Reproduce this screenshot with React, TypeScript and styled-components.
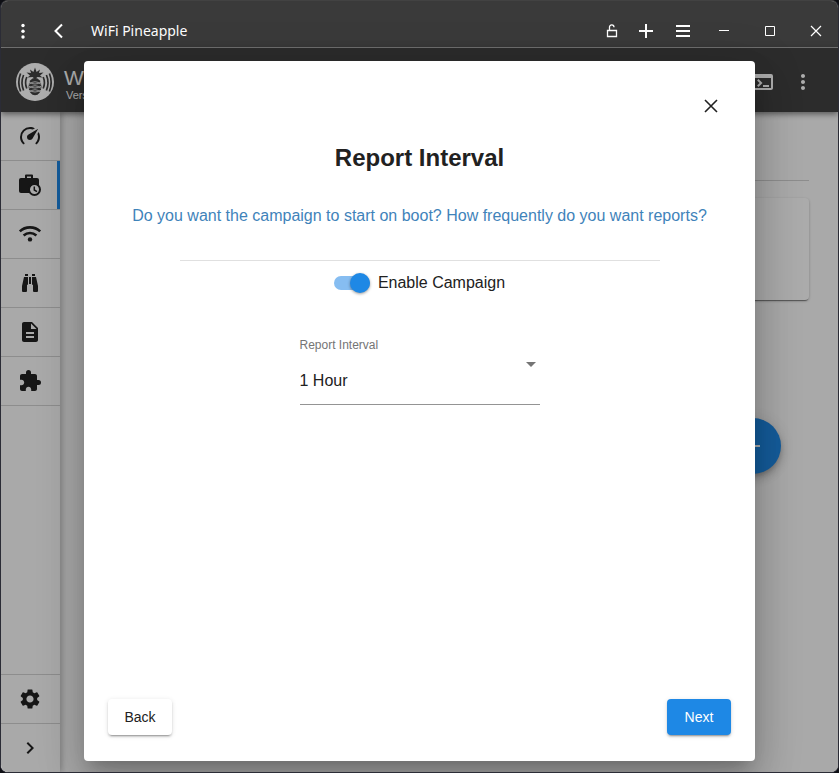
import React, { useState } from "react";
import styled, { createGlobalStyle } from "styled-components";
import {
  MdAdd,
  MdChevronRight,
  MdDescription,
  MdExtension,
  MdMoreVert,
  MdOutlineTerminal,
  MdSettings,
} from "react-icons/md";

const GlobalStyle = createGlobalStyle`
  *, *::before, *::after { box-sizing: border-box; }
  body {
    margin: 0;
    background: #0e0f14;
    color: #212121;
    font-family: "Liberation Sans", Arial, sans-serif;
    font-size: 16px;
  }
  button, select, input { font: inherit; }
`;

/* ---------- window frame ---------- */

const AppWindow = styled.div`
  display: flex;
  flex-direction: column;
  min-height: 100vh;
  border: 1px solid #2b2c36;
  border-top-color: #424242;
  border-radius: 8px;
  overflow: hidden;
  background: #aaaaaa;
`;

const TitleBar = styled.header`
  display: flex;
  align-items: center;
  height: 47px;
  padding: 13px 0 0 4px;
  background: #3a3a3a;
  border-bottom: 1px solid #7b7b7b;
  color: #ffffff;
`;

const BarButton = styled.button<{ $width: number }>`
  display: flex;
  align-items: center;
  justify-content: center;
  width: ${(p) => p.$width}px;
  height: 32px;
  padding: 0;
  border: 0;
  background: none;
  color: inherit;
`;

const WindowTitle = styled.h1`
  flex: 1;
  margin: 0 0 0 14px;
  font-family: "Noto Sans", "Open Sans", sans-serif;
  font-size: 14px;
  font-weight: 400;
  line-height: 20px;
`;

/* ---------- application shell ---------- */

const AppArea = styled.div`
  position: relative;
  display: flex;
  flex: 1;
  flex-direction: column;
  background: #fafafa;
`;

const Toolbar = styled.div`
  z-index: 2;
  display: flex;
  align-items: center;
  height: 64px;
  padding: 3px 15px 0;
  background: #424242;
  color: #ffffff;
  box-shadow: 0 2px 6px rgba(0, 0, 0, 0.5);
`;

const Brand = styled.div`
  flex: 1;
  margin-left: 10px;
  padding-top: 4px;
`;

const BrandName = styled.div`
  font-size: 21px;
  line-height: 22px;
`;

const BrandVersion = styled.div`
  padding-left: 2px;
  font-size: 11px;
  line-height: 12px;
`;

const ToolbarButton = styled.button`
  display: flex;
  align-items: center;
  justify-content: center;
  width: 40px;
  height: 40px;
  padding: 0;
  border: 0;
  background: none;
  color: inherit;
`;

const Columns = styled.div`
  display: flex;
  flex: 1;
`;

const Sidebar = styled.nav`
  z-index: 1;
  display: flex;
  flex-direction: column;
  justify-content: space-between;
  width: 59px;
  background: #fafafa;
  box-shadow: 2px 0 6px rgba(0, 0, 0, 0.25);
`;

const NavGroup = styled.div`
  display: flex;
  flex-direction: column;
`;

const NavItem = styled.button<{ $active?: boolean; $line?: "top" | "bottom" }>`
  display: flex;
  align-items: center;
  justify-content: center;
  height: 49px;
  padding: 0 1px 0 0;
  border: 0 solid #d0d0d0;
  border-${(p) => p.$line ?? "bottom"}-width: 1px;
  background: none;
  color: #212121;
  box-shadow: ${(p) => (p.$active ? "inset -3px 0 0 #1e88e5" : "none")};
`;

const Main = styled.main`
  display: flex;
  flex: 1;
  flex-direction: column;
  padding: 68px 29px 0 28px;
`;

const Rule = styled.hr`
  width: 100%;
  margin: 0;
  border: 0;
  border-top: 1px solid #d0d0d0;
`;

const Card = styled.section`
  height: 102px;
  margin-top: 17px;
  border-radius: 4px;
  background: #fcfcfc;
  box-shadow: 0 2px 1px -1px rgba(0, 0, 0, 0.4), 0 1px 3px rgba(0, 0, 0, 0.25);
`;

const AddButton = styled.button`
  display: flex;
  align-items: center;
  align-self: flex-end;
  justify-content: center;
  width: 56px;
  height: 56px;
  margin: 118px 28px 0 0;
  padding: 0;
  border: 0;
  border-radius: 50%;
  background: #1e88e5;
  color: #ffffff;
  box-shadow: 0 3px 5px -1px rgba(0, 0, 0, 0.2), 0 6px 10px rgba(0, 0, 0, 0.14),
    0 1px 18px rgba(0, 0, 0, 0.12);
`;

/* ---------- dialog ---------- */

const Backdrop = styled.div`
  position: absolute;
  inset: 0;
  z-index: 3;
  display: flex;
  padding: 13px 83px 11px;
  background: rgba(0, 0, 0, 0.32);
`;

const Dialog = styled.section`
  display: flex;
  flex: 1;
  flex-direction: column;
  padding: 25px 24px 26px;
  border-radius: 4px;
  background: #ffffff;
  box-shadow: 0 11px 15px -7px rgba(0, 0, 0, 0.2),
    0 24px 38px 3px rgba(0, 0, 0, 0.14), 0 9px 46px 8px rgba(0, 0, 0, 0.12);
`;

const CloseButton = styled.button`
  display: flex;
  align-items: center;
  align-self: flex-end;
  justify-content: center;
  width: 40px;
  height: 40px;
  padding: 0;
  border: 0;
  background: none;
  color: #212121;
`;

const Content = styled.div`
  display: flex;
  flex: 1;
  flex-direction: column;
  align-items: center;
`;

const Heading = styled.h2`
  margin: 16px 0 30px;
  font-size: 24px;
  font-weight: 700;
  line-height: 32px;
`;

const Question = styled.p`
  margin: 0;
  color: #3f83ba;
  line-height: 24px;
  text-align: center;
`;

const Divider = styled.hr`
  width: 100%;
  max-width: 480px;
  margin: 32px 0 10px;
  border: 0;
  border-top: 1px solid #e0e0e0;
`;

const ToggleLabel = styled.label`
  display: flex;
  align-items: center;
  gap: 8px;
  line-height: 24px;
`;

const Toggle = styled.input`
  display: flex;
  align-items: center;
  width: 36px;
  height: 14px;
  margin: 0;
  appearance: none;
  border-radius: 7px;
  background: #bdbdbd;

  &::before {
    content: "";
    width: 20px;
    height: 20px;
    border-radius: 50%;
    background: #fafafa;
    box-shadow: 0 1px 3px rgba(0, 0, 0, 0.4);
  }

  &:checked {
    justify-content: flex-end;
    background: #86bdf1;
  }

  &:checked::before { background: #1e88e5; }
`;

const Field = styled.div`
  position: relative;
  display: flex;
  flex-direction: column;
  width: 240px;
  margin-top: 42px;
`;

const FieldLabel = styled.label`
  color: #757575;
  font-size: 12px;
  line-height: 16px;
`;

const Select = styled.select`
  height: 52px;
  padding: 4px 24px 0 0;
  appearance: none;
  border: 0;
  border-bottom: 1px solid #949494;
  border-radius: 0;
  background: none;
  color: #212121;
`;

const Arrow = styled.svg`
  position: absolute;
  top: 25px;
  right: 4px;
  pointer-events: none;
`;

const Actions = styled.footer`
  display: flex;
  justify-content: space-between;
`;

const ActionButton = styled.button<{ $primary?: boolean }>`
  min-width: 64px;
  height: 36px;
  padding: 0 16px;
  border: 0;
  border-radius: 4px;
  background: ${(p) => (p.$primary ? "#1e88e5" : "#ffffff")};
  color: ${(p) => (p.$primary ? "#ffffff" : "#212121")};
  font-size: 14px;
  font-weight: 500;
  box-shadow: 0 3px 1px -2px rgba(0, 0, 0, 0.2), 0 2px 2px rgba(0, 0, 0, 0.14),
    0 1px 5px rgba(0, 0, 0, 0.12);
`;

/* ---------- drawings ---------- */

const Glyph = ({ d }: { d: string }) => (
  <svg width="24" height="24" viewBox="0 0 24 24" fill="currentColor" aria-hidden="true">
    <path d={d} />
  </svg>
);

const GAUGE =
  "M12,16A3,3 0 0,1 9,13C9,11.88 9.61,10.9 10.5,10.39L20.21,4.77L14.68,14.35C14.18,15.33 13.17,16 12,16M12,3C13.81,3 15.5,3.5 16.97,4.32L14.87,5.53C14,5.19 13,5 12,5A8,8 0 0,0 4,13C4,15.21 4.89,17.21 6.34,18.65H6.35C6.74,19.04 6.74,19.67 6.35,20.06C5.96,20.45 5.32,20.45 4.93,20.07V20.07C3.12,18.26 2,15.76 2,13A10,10 0 0,1 12,3M22,13C22,15.76 20.88,18.26 19.07,20.07V20.07C18.68,20.45 18.05,20.45 17.66,20.06C17.27,19.67 17.27,19.04 17.66,18.65V18.65C19.11,17.2 20,15.21 20,13C20,12 19.81,11 19.46,10.1L20.67,8C21.5,9.5 22,11.18 22,13Z";
const BINOCULARS =
  "M11,6H13V13H11V6M9,20A1,1 0 0,1 8,21H5A1,1 0 0,1 4,20V15L6,6H10V13A1,1 0 0,1 9,14V20M10,5H7V3H10V5M15,20V14A1,1 0 0,1 14,13V6H18L20,15V20A1,1 0 0,1 19,21H16A1,1 0 0,1 15,20M14,5V3H17V5H14Z";

const CampaignIcon = () => (
  <svg width="24" height="24" viewBox="0 0 24 24" fill="none" aria-hidden="true">
    <path d="M8 6V2.5H14V6" stroke="currentColor" strokeWidth="2" strokeLinejoin="round" />
    <rect x="1" y="5" width="20" height="15" rx="2" fill="currentColor" />
    <circle cx="16.5" cy="16.5" r="5.5" fill="#fafafa" stroke="currentColor" strokeWidth="2" />
    <path d="M16.3 13.5V17L19 18.7" stroke="currentColor" strokeWidth="1.5" />
  </svg>
);

const WifiIcon = () => (
  <svg
    width="24"
    height="24"
    viewBox="0 0 24 24"
    fill="none"
    stroke="currentColor"
    strokeWidth="2.6"
    aria-hidden="true"
  >
    <path d="M1.8 9.4C7.5 4 16.5 4 22.2 9.4" />
    <path d="M5.6 13.5C9.3 10.2 14.7 10.2 18.4 13.5" />
    <circle cx="12" cy="17.4" r="2.2" fill="currentColor" stroke="none" />
  </svg>
);

const PineappleLogo = () => (
  <svg width="38" height="38" viewBox="0 0 38 38" aria-hidden="true">
    <circle cx="19" cy="19" r="19" fill="#ffffff" />
    <ellipse cx="19" cy="23.5" rx="6.5" ry="8.8" fill="#424242" />
    <path
      d="M19 4.5L20.6 9L24 6.5L23 10L27.5 9.5L24 12.5L26.5 14.5L21.5 14L19 16L16.5 14L11.5 14.5L14 12.5L10.5 9.5L15 10L14 6.5L17.4 9Z"
      fill="#424242"
    />
    <path
      d="M12.5 19Q19 23 25.5 19M12.5 23Q19 27 25.5 23M12.5 27Q19 31 25.5 27M12.5 21.5Q19 16 25.5 21.5M12.5 25.5Q19 20 25.5 25.5M12.5 29.5Q19 24 25.5 29.5"
      stroke="#ffffff"
      strokeWidth="0.8"
      fill="none"
    />
    <path
      d="M10.8 14Q8.4 19.5 10.8 25.5M7.6 12Q4.4 19.5 7.6 27.5M4.6 10.5Q1 19.5 4.6 28.5M27.2 14Q29.6 19.5 27.2 25.5M30.4 12Q33.6 19.5 30.4 27.5M33.4 10.5Q37 19.5 33.4 28.5"
      stroke="#424242"
      strokeWidth="1.7"
      fill="none"
    />
  </svg>
);

const LineIcon = ({ d, weight = 1 }: { d: string; weight?: number }) => (
  <svg
    width="16"
    height="16"
    viewBox="0 0 16 16"
    fill="none"
    stroke="currentColor"
    strokeWidth={weight}
    aria-hidden="true"
  >
    <path d={d} />
  </svg>
);

const KebabIcon = () => (
  <svg width="4" height="16" viewBox="0 0 4 16" fill="currentColor" aria-hidden="true">
    <circle cx="2" cy="2.5" r="1.7" />
    <circle cx="2" cy="8.2" r="1.7" />
    <circle cx="2" cy="14" r="1.7" />
  </svg>
);

const intervals = ["1 Hour", "6 Hours", "12 Hours", "24 Hours"];

export default function App() {
  const [enabled, setEnabled] = useState(true);
  const [reportInterval, setReportInterval] = useState(intervals[0]);

  return (
    <>
      <GlobalStyle />
      <AppWindow>
        <TitleBar>
          <BarButton $width={36} aria-label="Menu">
            <KebabIcon />
          </BarButton>
          <BarButton $width={36} aria-label="Go back">
            <LineIcon d="M11 1.5L4.5 8L11 14.5" weight={2} />
          </BarButton>
          <WindowTitle>WiFi Pineapple</WindowTitle>
          <BarButton $width={32} aria-label="Site security">
            <LineIcon d="M3.5 7.5H12.5V13.5H3.5ZM5.5 7.5V4C5.5 1.2 10 1.2 10 4.2" weight={1.3} />
          </BarButton>
          <BarButton $width={36} aria-label="New tab">
            <LineIcon d="M8 1V15M1 8H15" weight={2} />
          </BarButton>
          <BarButton $width={38} aria-label="Options">
            <LineIcon d="M1 3H15M1 8H15M1 13H15" weight={2} />
          </BarButton>
          <BarButton $width={44} aria-label="Minimize">
            <LineIcon d="M3 7.5H13" />
          </BarButton>
          <BarButton $width={48} aria-label="Maximize">
            <LineIcon d="M3.5 3.5H12.5V12.5H3.5Z" />
          </BarButton>
          <BarButton $width={44} aria-label="Close window">
            <LineIcon d="M3 3L13 13M13 3L3 13" weight={1.2} />
          </BarButton>
        </TitleBar>

        <AppArea>
          <Toolbar>
            <PineappleLogo />
            <Brand>
              <BrandName>WiFi Pineapple</BrandName>
              <BrandVersion>Version</BrandVersion>
            </Brand>
            <ToolbarButton aria-label="Terminal">
              <MdOutlineTerminal size={24} />
            </ToolbarButton>
            <ToolbarButton aria-label="More">
              <MdMoreVert size={24} />
            </ToolbarButton>
          </Toolbar>

          <Columns>
            <Sidebar>
              <NavGroup>
                <NavItem aria-label="Dashboard"><Glyph d={GAUGE} /></NavItem>
                <NavItem $active aria-label="Campaigns"><CampaignIcon /></NavItem>
                <NavItem aria-label="PineAP"><WifiIcon /></NavItem>
                <NavItem aria-label="Recon"><Glyph d={BINOCULARS} /></NavItem>
                <NavItem aria-label="Logging"><MdDescription size={24} /></NavItem>
                <NavItem aria-label="Modules"><MdExtension size={24} /></NavItem>
              </NavGroup>
              <NavGroup>
                <NavItem $line="top" aria-label="Settings"><MdSettings size={24} /></NavItem>
                <NavItem $line="top" aria-label="Expand"><MdChevronRight size={24} /></NavItem>
              </NavGroup>
            </Sidebar>
            <Main>
              <Rule />
              <Card />
              <AddButton aria-label="Add campaign">
                <MdAdd size={24} />
              </AddButton>
            </Main>
          </Columns>

          <Backdrop>
            <Dialog role="dialog" aria-modal="true" aria-labelledby="dialog-title">
              <CloseButton aria-label="Close dialog">
                <LineIcon d="M2 2L14 14M14 2L2 14" weight={1.6} />
              </CloseButton>
              <Content>
                <Heading id="dialog-title">Report Interval</Heading>
                <Question>
                  Do you want the campaign to start on boot? How frequently do you want reports?
                </Question>
                <Divider />
                <ToggleLabel>
                  <Toggle
                    type="checkbox"
                    role="switch"
                    checked={enabled}
                    onChange={(e) => setEnabled(e.target.checked)}
                  />
                  Enable Campaign
                </ToggleLabel>
                <Field>
                  <FieldLabel htmlFor="interval">Report Interval</FieldLabel>
                  <Select
                    id="interval"
                    value={reportInterval}
                    onChange={(e) => setReportInterval(e.target.value)}
                  >
                    {intervals.map((name) => (
                      <option key={name}>{name}</option>
                    ))}
                  </Select>
                  <Arrow width="10" height="5" viewBox="0 0 10 5" fill="#757575">
                    <path d="M0 0H10L5 5Z" />
                  </Arrow>
                </Field>
              </Content>
              <Actions>
                <ActionButton>Back</ActionButton>
                <ActionButton $primary>Next</ActionButton>
              </Actions>
            </Dialog>
          </Backdrop>
        </AppArea>
      </AppWindow>
    </>
  );
}
